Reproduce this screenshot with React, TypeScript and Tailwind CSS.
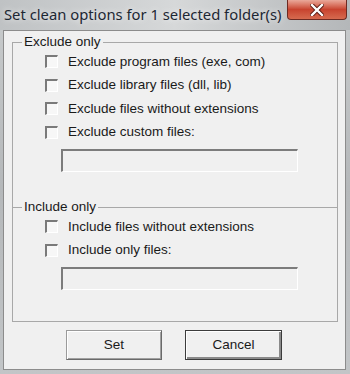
import React from "react";

const uiFont = { fontFamily: '"Liberation Sans", Arial, sans-serif' };

function Check({ label }: { label: string }) {
  return (
    <label className="flex h-[23.5px] items-center pl-[32px] text-[13.5px] text-[#1a1a1a]">
      <span className="mr-[10px] block h-[13px] w-[13px] border-t-2 border-l-2 border-b border-r border-t-[#7a7a7a] border-l-[#7a7a7a] border-b-white border-r-white bg-[#f7f7f7]" />
      <span>{label}</span>
    </label>
  );
}

function Field() {
  return (
    <div className="ml-[48px] h-[23px] w-[237px] border-t-2 border-l-2 border-b border-r border-t-[#7c7c7c] border-l-[#7c7c7c] border-b-white border-r-white bg-[#f0f0f0]" />
  );
}

function Group({ title, children, className }: { title: string; children: React.ReactNode; className?: string }) {
  return (
    <fieldset className={"ml-[8px] w-[326px] border border-[#a8a8a8] px-0 " + (className ?? "")}>
      <legend className="ml-[9px] px-[2px] text-[13.5px] leading-[16px] text-[#1a1a1a]">{title}</legend>
      {children}
    </fieldset>
  );
}

export default function App() {
  return (
    <div
      className="flex h-[374px] w-[350px] flex-col bg-gradient-to-b from-[#c9cccd] via-[#b5b8ba] to-[#c2c5c7]"
      style={uiFont}
    >
      {/* title bar */}
      <div className="flex h-[30px] items-start justify-between bg-gradient-to-r from-[#bfc2c4] via-[#d6d8d9] to-[#b4b7b9]">
        <div
          className="pl-[4px] pt-[5px] text-[14.8px] leading-[18px] text-[#1d2733]"
          style={{ fontFamily: '"Noto Sans", "Open Sans", sans-serif', textShadow: "0 0 6px rgba(255,255,255,0.9)" }}
        >
          Set clean options for 1 selected folder(s)
        </div>
        <div className="mr-[3px] flex h-[20px] w-[60px] items-center justify-center rounded-b-[4px] border border-t-0 border-[#6d2a22] bg-gradient-to-b from-[#e9a89a] via-[#c8432f] to-[#d66a4f]">
          <svg width="14" height="12" viewBox="0 0 14 12">
            <path d="M2 1 L12 11 M12 1 L2 11" stroke="#5a1a12" strokeWidth="4.2" strokeLinecap="square" />
            <path d="M2 1 L12 11 M12 1 L2 11" stroke="#ffffff" strokeWidth="2.4" strokeLinecap="square" />
          </svg>
        </div>
      </div>

      {/* client area */}
      <div className="ml-[3px] h-[340px] w-[343px] border border-[#8c8c8c] bg-[#f0f0f0]">
        <Group title="Exclude only" className="mt-[3px] border-b-0 pb-[35px]">
          <Check label="Exclude program files (exe, com)" />
          <Check label="Exclude library files (dll, lib)" />
          <Check label="Exclude files without extensions" />
          <Check label="Exclude custom files:" />
          <div className="mt-[5px]">
            <Field />
          </div>
        </Group>
        <Group title="Include only" className="-mt-[8px] pb-[31px]">
          <Check label="Include files without extensions" />
          <Check label="Include only files:" />
          <div className="mt-[5px]">
            <Field />
          </div>
        </Group>

        <div className="mt-[8px] flex justify-center gap-[23px] pr-[1px]">
          <button className="h-[30px] w-[96px] border border-[#9a9a9a] border-b-[#6a6a6a] border-r-[#6a6a6a] bg-[#f0f0f0] text-[13.5px] text-[#1a1a1a] shadow-[inset_1px_1px_0_#ffffff,inset_-1px_-1px_0_#a0a0a0]">
            Set
          </button>
          <button className="h-[30px] w-[97px] border border-[#3c3c3c] bg-[#f0f0f0] text-[13.5px] text-[#1a1a1a] shadow-[inset_1px_1px_0_#ffffff,inset_-2px_-2px_0_#8a8a8a]">
            Cancel
          </button>
        </div>
      </div>
    </div>
  );
}
